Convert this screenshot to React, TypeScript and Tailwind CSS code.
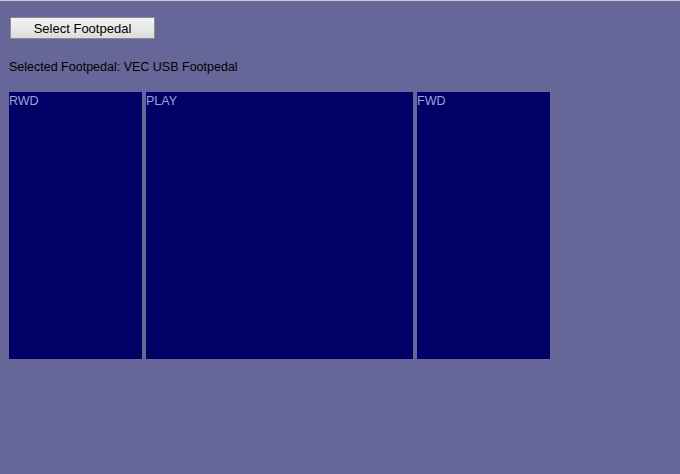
export default function App() {
  return (
    <div className="w-[680px] h-[474px] bg-[#666699] border-t border-[#c8c8d0] overflow-hidden flex flex-col items-start" style={{ fontFamily: '"Liberation Sans", Arial, sans-serif' }}>
      <button className="ml-[10px] mt-[16px] w-[145px] h-[22px] border border-[#8c8c8c] bg-gradient-to-b from-[#f4f4f4] to-[#dcdcdc] text-[13px] text-black leading-none flex items-center justify-center">
        Select Footpedal
      </button>
      <div className="ml-[9px] mt-[21px] text-[12.5px] text-black leading-[14px]">
        Selected Footpedal: VEC USB Footpedal
      </div>
      <div className="flex gap-[4px] ml-[9px] mt-[18px]">
        <div className="w-[133px] h-[267px] bg-[#000066] text-[#a0a0d8] text-[12.5px] leading-[16px] pt-[1px]">RWD</div>
        <div className="w-[267px] h-[267px] bg-[#000066] text-[#a0a0d8] text-[12.5px] leading-[16px] pt-[1px]">PLAY</div>
        <div className="w-[133px] h-[267px] bg-[#000066] text-[#a0a0d8] text-[12.5px] leading-[16px] pt-[1px]">FWD</div>
      </div>
    </div>
  );
}
